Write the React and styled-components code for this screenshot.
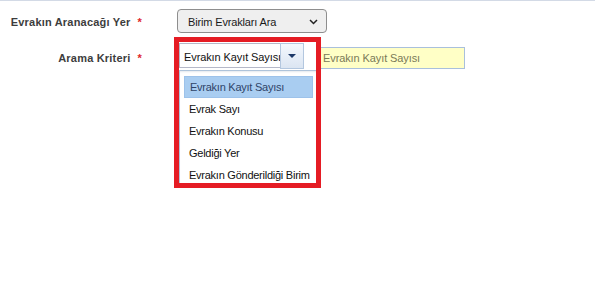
import React from "react";
import styled, { createGlobalStyle } from "styled-components";

const Global = createGlobalStyle`
  html, body { margin: 0; padding: 0; background: #ffffff; }
  body { font-family: "Liberation Sans", Arial, sans-serif; font-size: 11px; color: #222; }
`;

const Page = styled.div`
  width: 595px;
  height: 286px;
  background: #fff;
  overflow: hidden;
`;

const TopLine = styled.div`
  height: 1px;
  background: #d3dae6;
`;

const Form = styled.div`
  display: grid;
  grid-template-columns: 142px 1fr;
  column-gap: 35px;
  row-gap: 4px;
  padding-top: 8px;
`;

const LabelCell = styled.div`
  display: flex;
  justify-content: flex-end;
  align-items: flex-start;
  gap: 7px;
  padding-top: ${(p) => p.$top}px;
  line-height: 14px;
  font-weight: bold;
  font-size: 11px;
  letter-spacing: 0.2px;
  color: #3d3d3d;
`;

const Star = styled.span`
  color: #e0262b;
  font-weight: bold;
`;

const SelectBox = styled.div`
  box-sizing: border-box;
  width: 150px;
  height: 24px;
  border: 1px solid #8e8e8e;
  border-radius: 4px;
  background: #efefef;
  display: flex;
  align-items: center;
  justify-content: space-between;
  padding: 1px 8px 0 10px;
  font-size: 11px;
  color: #1a1a1a;
  letter-spacing: -0.15px;
`;

const Row = styled.div`
  display: flex;
  align-items: flex-start;
`;

const RedFrame = styled.div`
  position: relative;
  z-index: 2;
  box-sizing: border-box;
  margin-left: -3px;
  width: 147px;
  height: 151px;
  border: 5px solid #e51c24;
  overflow: hidden;
  padding-top: 1px;
  background: #fff;
`;

const Combo = styled.div`
  display: flex;
  height: 26px;
`;

const ComboInput = styled.div`
  box-sizing: border-box;
  width: 101px;
  height: 25px;
  border: 1px solid #b5b8c8;
  border-right: none;
  background: #fff;
  padding: 3px 0 0 4px;
  line-height: 20px;
  font-size: 11px;
  color: #111;
  white-space: nowrap;
  overflow: hidden;
  letter-spacing: -0.1px;
`;

const Trigger = styled.div`
  box-sizing: border-box;
  width: 24px;
  height: 26px;
  border: 1px solid #b3c7df;
  background: linear-gradient(#f4f8fd, #dbe5f2);
  display: flex;
  align-items: center;
  justify-content: center;
`;

const List = styled.div`
  box-sizing: border-box;
  width: 139px;
  margin-top: 1px;
  border: 1px solid #aec3da;
  border-bottom: none;
  padding: 5px 4px 0 4px;
  background: #fff;
  box-shadow: inset 0 2px 2px -1px #e4e8ee;
`;

const Option = styled.div`
  box-sizing: border-box;
  height: 22px;
  line-height: ${(p) => (p.$selected ? 20 : 22)}px;
  padding-left: 5px;
  font-size: 11px;
  white-space: nowrap;
  letter-spacing: -0.25px;
  color: ${(p) => (p.$selected ? "#2f4468" : "#111")};
  background: ${(p) => (p.$selected ? "#a9cdf1" : "transparent")};
  border: ${(p) => (p.$selected ? "1px solid #9dc2ea" : "none")};
`;

const Tip = styled.div`
  box-sizing: border-box;
  margin-left: -2px;
  margin-top: 10px;
  width: 146px;
  height: 22px;
  border: 1px solid #a9c0dc;
  background: #ffffc6;
  padding-left: 3px;
  line-height: 20px;
  font-size: 11px;
  color: #7a7a58;
  white-space: nowrap;
  letter-spacing: -0.1px;
`;

const options = [
  "Evrakın Kayıt Sayısı",
  "Evrak Sayı",
  "Evrakın Konusu",
  "Geldiği Yer",
  "Evrakın Gönderildiği Birim",
];

export default function App() {
  return (
    <Page>
      <Global />
      <TopLine />
      <Form>
        <LabelCell $top={6}>
          <span>Evrakın Aranacağı Yer</span>
          <Star>*</Star>
        </LabelCell>
        <SelectBox>
          <span>Birim Evrakları Ara</span>
          <svg width="9" height="6" viewBox="0 0 9 6">
            <path d="M1 1 L4.5 4.5 L8 1" fill="none" stroke="#222" strokeWidth="1.5" />
          </svg>
        </SelectBox>

        <LabelCell $top={14}>
          <span>Arama Kriteri</span>
          <Star>*</Star>
        </LabelCell>
        <Row>
          <RedFrame>
            <Combo>
              <ComboInput>Evrakın Kayıt Sayısı</ComboInput>
              <Trigger>
                <svg width="8" height="4" viewBox="0 0 8 4">
                  <path d="M0 0 H8 L4 4 Z" fill="#1c3868" />
                </svg>
              </Trigger>
            </Combo>
            <List>
              {options.map((o, i) => (
                <Option key={o} $selected={i === 0}>
                  {o}
                </Option>
              ))}
            </List>
          </RedFrame>
          <Tip>Evrakın Kayıt Sayısı</Tip>
        </Row>
      </Form>
    </Page>
  );
}
